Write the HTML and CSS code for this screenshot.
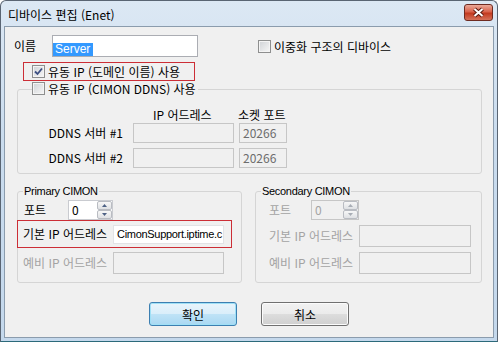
FILE: index.html
```html
<!DOCTYPE html>
<html lang="ko">
<head>
  <meta charset="UTF-8">
  <meta name="viewport" content="width=device-width, initial-scale=1.0">
  <title>디바이스 편집 (Enet)</title>
  <link rel="stylesheet" href="styles.css">
</head>
<body>
  <div class="window">
    <div class="titlebar">
      <span class="title">디바이스 편집 (Enet)</span>
      <span class="close-btn">
        <svg width="13" height="11" viewBox="0 0 13 11">
          <path d="M2.5 2 L10.5 9 M10.5 2 L2.5 9" stroke="#5b1a10" stroke-width="4"/>
          <path d="M2.5 2 L10.5 9 M10.5 2 L2.5 9" stroke="#fff" stroke-width="2"/>
        </svg>
      </span>
    </div>
    <div class="client">
      <div class="name-row">
        <span class="name-lbl">이름</span>
        <div class="field name-field"><span class="sel">Server</span></div>
        <span class="check dual"><span class="box"></span>이중화 구조의 디바이스</span>
      </div>

      <div class="mark domain">
        <span class="box">
          <svg width="11" height="11" viewBox="0 0 11 11"><path d="M2 5.5 L4.5 8 L9 2.5" fill="none" stroke="#3d4f82" stroke-width="1.8"/></svg>
        </span>유동 IP (도메인 이름) 사용
      </div>

      <fieldset class="group ddns">
        <legend><span class="check"><span class="box"></span>유동 IP (CIMON DDNS) 사용</span></legend>
        <div class="ddns-head">
          <span class="ip-head">IP 어드레스</span>
          <span>소켓 포트</span>
        </div>
        <div class="ddns-line first">
          <span class="ddns-lbl">DDNS 서버 #1</span>
          <div class="field off ip"></div>
          <div class="field off port">20266</div>
        </div>
        <div class="ddns-line">
          <span class="ddns-lbl">DDNS 서버 #2</span>
          <div class="field off ip"></div>
          <div class="field off port">20266</div>
        </div>
      </fieldset>

      <div class="cimon-row">
        <fieldset class="group cimon primary">
          <legend>Primary CIMON</legend>
          <div class="c-line port-line">
            <span class="c-lbl">포트</span>
            <div class="spin">
              <span class="val">0</span>
              <span class="arrows">
                <span><svg width="5" height="3" viewBox="0 0 5 3"><path d="M0 3 L2.5 0 L5 3Z" fill="#4d6185"/></svg></span>
                <span><svg width="5" height="3" viewBox="0 0 5 3"><path d="M0 0 L5 0 L2.5 3Z" fill="#4d6185"/></svg></span>
              </span>
            </div>
          </div>
          <div class="mark c-line main-ip">
            <span class="c-lbl">기본 IP 어드레스</span>
            <div class="field ip-field">CimonSupport.iptime.c</div>
          </div>
          <div class="c-line spare">
            <span class="c-lbl dim">예비 IP 어드레스</span>
            <div class="field off ip-field"></div>
          </div>
        </fieldset>

        <fieldset class="group cimon secondary">
          <legend>Secondary CIMON</legend>
          <div class="c-line port-line">
            <span class="c-lbl dim">포트</span>
            <div class="spin off">
              <span class="val">0</span>
              <span class="arrows">
                <span><svg width="5" height="3" viewBox="0 0 5 3"><path d="M0 3 L2.5 0 L5 3Z" fill="#a8adb5"/></svg></span>
                <span><svg width="5" height="3" viewBox="0 0 5 3"><path d="M0 0 L5 0 L2.5 3Z" fill="#a8adb5"/></svg></span>
              </span>
            </div>
          </div>
          <div class="c-line ip-row">
            <span class="c-lbl dim">기본 IP 어드레스</span>
            <div class="field off ip-field"></div>
          </div>
          <div class="c-line ip-row">
            <span class="c-lbl dim">예비 IP 어드레스</span>
            <div class="field off ip-field"></div>
          </div>
        </fieldset>
      </div>

      <div class="buttons">
        <button class="btn ok">확인</button>
        <button class="btn">취소</button>
      </div>
    </div>
  </div>
</body>
</html>
```

FILE: styles.css
```css
body { margin: 0; background: #fff; font-family: "Noto Sans CJK KR", sans-serif; font-size: 12px; color: #000; }

/* window frame */
.window { width: 498px; height: 342px; box-sizing: border-box; border: 1px solid #5a6573; border-bottom-color: #2c6a7a; border-radius: 6px 6px 0 0; background: linear-gradient(#dce8f4, #cadcee 40%, #c4d8ec); padding: 0 3px 3px 3px; display: flex; flex-direction: column; }
.titlebar { height: 25px; display: flex; align-items: center; padding-left: 4px; }
.title { line-height: 14px; margin-top: 2px; }
.close-btn { margin-left: auto; margin-right: 1px; align-self: flex-start; margin-top: 3px; width: 29px; height: 17px; box-sizing: border-box; border: 1px solid #6e2b21; border-radius: 3px; background: linear-gradient(#eba999, #d9634c 45%, #c33a20 55%, #d5725a); display: flex; align-items: center; justify-content: center; }
.client { flex: 1; background: #f0f0f0; border: 1px solid #8b9cad; }

/* common controls */
.field { box-sizing: border-box; border: 1px solid #abadb3; background: #fff; white-space: nowrap; overflow: hidden; }
.field.off { background: #f0f0f0; border-color: #c6c6c6; }
.box { width: 13px; height: 13px; box-sizing: border-box; border: 1px solid #8e8f8f; background: linear-gradient(135deg, #cfd2d6, #f7f7f7); box-shadow: inset 0 0 0 1px #f4f4f4; display: flex; align-items: center; justify-content: center; flex: none; }
.check { display: inline-flex; align-items: center; gap: 3px; line-height: 13px; }
.mark { border: 1px solid #cc2e36; box-sizing: border-box; }
.dim { color: #a3a3a3; }

/* name row */
.name-row { display: flex; align-items: center; height: 22px; margin-top: 8px; }
.name-lbl { width: 38px; margin-left: 9px; line-height: 14px; }
.name-field { width: 146px; height: 22px; padding-top: 3px; }
.sel { display: inline-block; line-height: 13px; background: #3399ff; color: #fff; padding: 0 3px 0 2px; font-family: "Liberation Sans", sans-serif; }
.dual { margin-left: 60px; }

.domain { display: flex; align-items: center; gap: 3px; width: 172px; height: 19px; margin: 5px 0 0 18px; padding-left: 8px; line-height: 13px; }

/* group boxes */
.group { margin: 0; padding: 0; border: 1px solid #d5d5d5; border-radius: 3px; box-sizing: border-box; min-width: 0; }
.ddns { width: 465px; margin: 1px 0 0 12px; padding-bottom: 5px; }
.ddns legend { margin-left: 14px; padding: 0 2px 0 0; line-height: 13px; }
.ddns-head { display: flex; padding-top: 12px; height: 14px; line-height: 14px; }
.ip-head { margin-left: 135px; width: 85px; }
.ddns-line { display: flex; align-items: center; height: 20px; margin-top: 5px; }
.ddns-line.first { margin-top: 1px; }
.ddns-lbl { width: 105px; padding-right: 10px; text-align: right; line-height: 14px; }
.ddns .ip { width: 101px; height: 20px; }
.ddns .port { width: 48px; height: 20px; margin-left: 5px; padding-left: 3px; line-height: 18px; color: #6d6d6d; }

.cimon-row { display: flex; gap: 13px; margin: 11px 0 0 12px; }
.cimon legend { margin-left: 5px; padding: 0 1px; line-height: 13px; font-family: "Liberation Sans", sans-serif; font-size: 11px; letter-spacing: -0.3px; }
.primary { width: 225px; padding-bottom: 8px; }
.secondary { width: 227px; padding-bottom: 8px; }
.c-line { display: flex; align-items: center; line-height: 14px; }
.c-lbl { flex: none; }
.ip-field { width: 111px; height: 22px; line-height: 18px; padding-left: 3px; font-family: "Liberation Sans", sans-serif; font-size: 11px; letter-spacing: -0.3px; }

.port-line { margin-top: 2px; height: 20px; }
.primary .port-line { padding-left: 6px; }
.primary .port-line .c-lbl { width: 44px; }
.primary .c-lbl { width: 90px; }
.main-ip { margin-left: -1px; width: 215px; height: 28px; padding-left: 5px; }
.main-ip .ip-field { height: 19px; line-height: 17px; border-color: #e2e3e6; }
.spare { margin-top: 4px; height: 22px; padding-left: 5px; }

.secondary .c-line { padding-left: 13px; }
.secondary .c-lbl { width: 90px; }
.secondary .port-line .c-lbl { width: 42px; }
.secondary .ip-field { width: 112px; }
.ip-row { margin-top: 5px; height: 22px; }

/* spin edit */
.spin { display: flex; box-sizing: border-box; width: 45px; height: 20px; border: 1px solid #c9cbd0; background: #fff; }
.secondary .spin { width: 48px; }
.spin.off { background: #f0f0f0; border-color: #c6c6c6; color: #a3a3a3; }
.spin .val { flex: 1; padding-left: 3px; line-height: 18px; }
.arrows { width: 15px; display: flex; flex-direction: column; }
.arrows span { flex: 1; box-sizing: border-box; border: 1px solid #b9bcc2; border-radius: 2px; background: linear-gradient(#f7f7f7, #dfe1e4); display: flex; align-items: center; justify-content: center; }

/* buttons */
.buttons { display: flex; justify-content: center; gap: 24px; margin-top: 19px; }
.btn { width: 88px; height: 24px; font: inherit; color: #000; border: 1px solid #707070; border-radius: 3px; background: linear-gradient(#f2f2f2 0, #ebebeb 50%, #dddddd 50%, #cfcfcf 100%); box-shadow: inset 0 0 0 1px #fbfbfb; padding: 0; }
.btn.ok { border-color: #3c7fb1; background: linear-gradient(#e8f4fb 0, #d9eefa 50%, #bfe3f7 50%, #a9d8f2 100%); box-shadow: inset 0 0 0 1px #9fe0f6; }
```
